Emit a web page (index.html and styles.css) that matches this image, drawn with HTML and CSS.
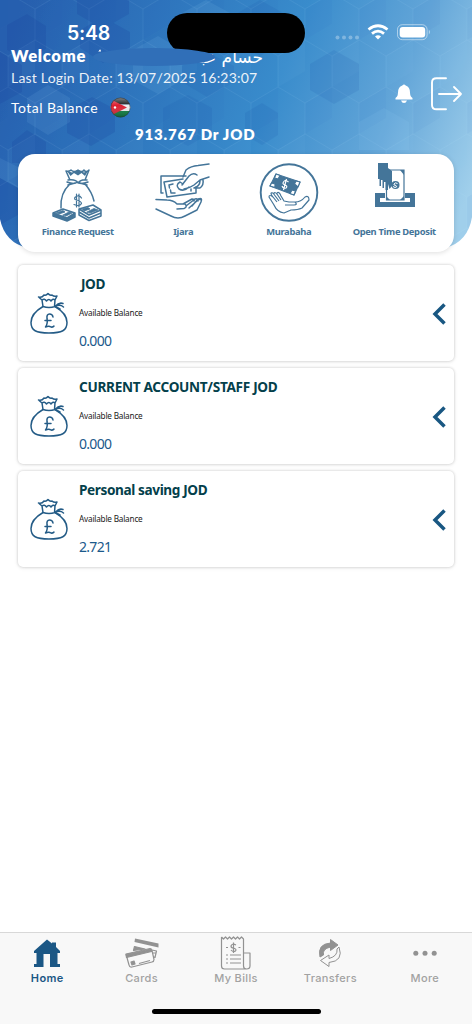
FILE: index.html
```html
<!DOCTYPE html>
<html lang="en">
<head>
<meta charset="utf-8">
<title>Accounts</title>
<link rel="stylesheet" href="styles.css">
</head>
<body>
<svg class="defs" width="0" height="0" aria-hidden="true">
  <symbol id="pouch" viewBox="0 0 38 44">
    <g fill="none" stroke="currentColor" stroke-width="1.500" stroke-linecap="round" stroke-linejoin="round">
      <path d="M13 15.500C7 19 1 24 1 31.500C1 39.500 6 42 19 42S37 39.500 37 31.500C37 24 31 19 25 15.500"/>
      <path d="M13 15.500Q19 17.500 25 15.500M13 15.500L12 9L8.500 6Q12 7 14 4Q16 5 18 2.500Q20 5 22 4Q24 6 27 5L25 9L24.500 15.500M12 9Q14.500 7 16.500 10Q19 7 21 10Q23 7 25 9M25 15.500Q29 11 33 12.500M25 15.500Q30 13 33.500 16M26 16L30 18"/>
      <path d="M23 26Q22.500 23 19.500 23Q16.500 23 17 27.500Q18 33 15.500 36Q19 34.500 21 36Q23 36.500 24 35M15 29.500H21"/>
    </g>
  </symbol>
</svg>
<main class="screen">
  <header class="hero">
    <svg class="hero-art" viewBox="0 0 472 248" preserveAspectRatio="none">
      <defs>
        <linearGradient id="sky" gradientUnits="userSpaceOnUse" x1="0" y1="60" x2="450" y2="240">
          <stop offset="0" stop-color="#2760af"/><stop offset=".3" stop-color="#2f77be"/>
          <stop offset=".55" stop-color="#398ccc"/><stop offset=".78" stop-color="#62a5d8"/><stop offset="1" stop-color="#a0cfeb"/>
        </linearGradient>
        <pattern id="hex" width="54" height="94" patternUnits="userSpaceOnUse" patternTransform="translate(35 -7)">
          <path d="M0 16L27 0V31L0 47Z" fill="#1855a8" opacity=".04"/>
          <path d="M27 63L54 47V78L27 94Z" fill="#8fd0f5" opacity=".05"/>
          <path d="M0 16L27 0L54 16V47L27 63L0 47ZM27 63V94" fill="none" stroke="#b9e2fa" stroke-width=".7" opacity=".11"/>
        </pattern>
        <clipPath id="heroShape"><path d="M0 0H472V217Q468 242 445 248H28Q5 243 0 219Z"/></clipPath>
      </defs>
      <g clip-path="url(#heroShape)">
        <path d="M0 0H472V248H0Z" fill="url(#sky)"/>
        <path d="M0 0H472V248H0Z" fill="url(#hex)"/>
        <g fill="#143f9a" opacity=".2">
          <path d="M7 25L27 14L46 26V49L27 60L7 50Z"/><path d="M77 0H129V14L103 29L77 14Z"/><path d="M80 30L103 17L130 32V48L103 63L80 48Z"/>
          <path d="M0 52L22 65V92L0 104Z"/><path d="M0 178L18 188V215L0 225Z"/><path d="M12 142L27 130L46 142V163H12Z"/><path d="M67 110L92 97L115 109V132L91 146L67 133Z"/>
        </g>
        <g fill="#164fa8" opacity=".12">
          <path d="M182 66L207 52L234 66V82L207 97L182 82Z"/><path d="M236 14L260 0L285 14V42L260 56L236 42Z"/><path d="M163 108L188 95L212 108V132L188 146L163 132Z"/><path d="M310 64L334 50L359 64V90L334 104L310 90Z"/><path d="M245 113L262 103L278 113V135L262 145L245 135Z"/>
        </g>
        <g fill="#a3dcff" opacity=".09">
          <path d="M0 158L18 167V188L0 178Z"/><path d="M27 98L48 85L70 98V122L48 135L27 122Z"/><path d="M133 50L158 36L182 50V80L158 94L133 80Z"/><path d="M206 0L230 13L206 28L182 13Z"/><path d="M359 122L384 108L409 122V150H359Z"/>
        </g>
      </g>
    </svg>

    <div class="status">
      <span class="clock">5:48</span>
      <svg class="signals" width="96" height="20" viewBox="0 0 96 20" fill="#fff">
        <g opacity=".3"><circle cx="2.500" cy="14.500" r="2"/><circle cx="9" cy="14.500" r="2"/><circle cx="15.500" cy="14.500" r="2"/><circle cx="22" cy="14.500" r="2"/></g>
        <g fill="none" stroke="#fff" stroke-width="2.800"><path d="M33.500 6.500Q43 -1 52.500 6.500"/><path d="M37 10.600Q43 5.600 49 10.600"/></g>
        <path d="M40 13.500Q43 11 46 13.500L43 16.500Z"/>
        <rect x="62.500" y="1.700" width="29.600" height="15" rx="4.800" fill="none" stroke="#fff" opacity=".5"/>
        <rect x="64.700" y="4" width="25.500" height="10.500" rx="3"/><path d="M93.800 6.500Q96.200 9 93.800 11.500Z" opacity=".5"/>
      </svg>
    </div>
    <div class="island"></div>

    <div class="profile">
      <div class="greeting">
        <p class="welcome">Welcome</p>
        <p class="customer" lang="ar" dir="rtl">حسام عبـ</p>
        <svg class="veil" width="124" height="21" viewBox="0 0 124 21"><ellipse cx="61" cy="10" rx="61" ry="9" fill="#306fb8"/><path d="M5 4.500L6.500 3.500V4.500ZM6 3L7.500 2.500L8 4.500H6.500Z" fill="#fff"/></svg>
        <p class="login">Last Login Date: 13/07/2025 16:23:07</p>
      </div>
      <div class="tools">
        <svg width="18" height="20" viewBox="0 0 18 20" fill="#fff"><path d="M7.300 1.500Q9 -.5 10.700 1.500Q15 3 15 8.500Q15 12.500 17.500 14V15.500H.5V14Q3 12.500 3 8.500Q3 3 7.300 1.500ZM6 16.500H12Q11 19 9 19T6 16.500Z"/></svg>
        <svg width="32" height="34" viewBox="0 0 32 34" fill="none" stroke="#fff" stroke-width="1.900" stroke-linecap="round" stroke-linejoin="round"><path d="M15 1.300H5.500Q1 1.300 1 5.500V28Q1 32.300 5.500 32.300H15M8 17H30M23 10L30 17L23 24"/></svg>
      </div>
    </div>

    <div class="total"><span>Total Balance</span>
      <svg width="21" height="21" viewBox="0 0 21 21">
        <defs><clipPath id="disc"><circle cx="10.500" cy="10.500" r="9.800"/></clipPath><linearGradient id="shine" x2="0" y2="1"><stop stop-color="#fff" stop-opacity=".5"/><stop offset=".4" stop-color="#fff" stop-opacity="0"/><stop offset="1" stop-color="#001b15" stop-opacity=".35"/></linearGradient></defs>
        <g clip-path="url(#disc)"><path fill="#191b1b" d="M0 0H21V7.500H0Z"/><path fill="#eee" d="M0 7.500H21V14H0Z"/><path fill="#087b3c" d="M0 14H21V21H0Z"/><path fill="#dc1f31" d="M0 2L17 10.500L0 19Z"/><circle cx="5" cy="10.500" r="1.200" fill="#fff"/><path fill="url(#shine)" d="M0 0H21V21H0Z"/></g>
        <circle cx="10.500" cy="10.500" r="9.600" fill="none" stroke="#343a3e" stroke-width=".8" opacity=".65"/>
      </svg>
    </div>
    <p class="amount">913.767 Dr JOD</p>

    <nav class="actions">
      <a class="action"><svg width="54" height="60" viewBox="0 0 54 60" fill="none" stroke="#447599" stroke-width="1.500" stroke-linejoin="round" stroke-linecap="round">
        <path d="M19 18L15 9Q18 10 20 8Q23 11 27 8Q31 11 33 8Q35 11 38 8L34 18M16 20Q24 23 26 20Q29 23 37 20M17 23L24 21M36 23L29 21M17 18Q25 17 27 21Q30 17 36 18M19 22Q9 31 10 46M34 22Q41 30 43 39"/><path d="M16 9L19.500 14L23 11L27 13.500L30.500 11L34 14L37 9L33 10.500L27 8L21 10.500Z" fill="#447599" stroke="none"/>
        <path d="M30.500 36Q29 33.500 26.500 34Q22.500 35 24 37.500Q30.500 39 30.500 41.500Q29 45 23 42.500M25.500 32V45M28 32V45" stroke-width="1.200"/>
        <path d="M2 51L12 47L24 51L16 56ZM2 51V54L16 59L24 55V51M16 56V59M2 52.500L16 57.500L24 53M28 47L42 43L50 48L38 53ZM28 50L38 56L50 51M28 53L38 58.500L50 54M28 47V53M50 48V54"/>
        <path d="M5 51L12 48.500L14 50L8 52ZM15 54L21 51L18 50L12 53ZM31 47L37 45.500L39 47L33 49ZM39 51L47 48L43 46.500L36 50Z" fill="#447599" stroke-width=".8"/>
      </svg><span>Finance Request</span></a>
      <a class="action"><svg width="56" height="60" viewBox="0 0 56 60" fill="none" stroke="#447599" stroke-width="1.500" stroke-linejoin="round" stroke-linecap="round">
        <path d="M8 31H6V14H31M28 17L9 20L12 35L41 31V25M14 23L14.500 26M14 23L18 22M16 31H20M15.500 28L16 31M36 29V27"/>
        <path d="M28 15L31 8Q36 4 43 3.500L54 2M27 23L34 14Q38 10 42 13M29 27Q35 26 39 23L45 18L54 15M48 18Q49 23 45 26H39M45 19Q45 24 39 26M34 25Q29 30 24 27Q20 23 25 20L28 22"/>
        <path d="M1 37.500L12 38Q18 38 22 42H30Q33 45 29 46.500L22 47M1 47L16 54Q23 58 30 54L42 48L46 40Q47 36 43 38L34 46M37 44L43 37Q48 35 46 40M31 44L40 37Q43 36 43 39M28 42L37 37Q40 37 39 39"/>
      </svg><span>Ijara</span></a>
      <a class="action"><svg width="60" height="60" viewBox="0 0 60 60" fill="none" stroke="#447599" stroke-width="1.200" stroke-linejoin="round">
        <circle cx="30" cy="30.500" r="28.300" stroke-width="1.900"/><path d="M17 12L41 20L35 33L11 24Z" fill="#447599"/><path d="M17 12L21 13.500L19 17L15.500 16ZM12.500 21L16 22L16 25.500L11 24ZM37 19L41 20L39 25L35.500 22ZM31 31.500L33 28L36.500 29L35 33Z" fill="#fff"/>
        <path d="M29.500 20Q26 17 24.500 20Q23 22 26 23Q29 24 27 26Q24 27 23 24M27.500 17L24.500 28" stroke="#fff"/>
        <path d="M15 43L10 35Q10 32 14 35L18 40M14 35Q10 30 14 31L20 39M15 32Q15 29 18 32L22 38M18 31Q20 29 22 34L25 39L30 40H36Q39 43 35 43H26M36 40Q42 40 46 35Q50 33 50 38L43 46Q39 48 32 48L25 51Q18 50 15 43"/>
      </svg><span>Murabaha</span></a>
      <a class="action"><svg width="60" height="60" viewBox="0 0 60 60" fill="#447599">
        <path d="M11 31H21V36H16V40H46V36H41V31H51V45H11Z"/>
        <path d="M22.500 8H40V38H22.500Z" fill="#fff" stroke="#447599" stroke-width="1.200"/><path d="M36 8H40V13ZM22 38V34L26 38ZM40 34V38H36Z"/><circle cx="31.500" cy="23" r="4"/>
        <path d="M33.500 21.500Q31 20 30 22Q29 23 32 23.500Q34 25 31 25.500L29 24.500" fill="none" stroke="#fff"/>
        <path d="M14 1H24V6L28 9V24L25.500 27L24 22V28H21.500V20H20V26H18.500V18H17V24H15.500V17H14Z"/>
      </svg><span>Open Time Deposit</span></a>
    </nav>
  </header>

  <section class="accounts">
    <article class="account"><svg class="pouch"><use href="#pouch"/></svg><div class="details"><h2 class="short">JOD</h2><p class="caption">Available Balance</p><p class="balance">0.000</p></div><svg class="chevron" viewBox="0 0 14 22"><path d="M12.500 1.500L3 11L12.500 20.500" fill="none" stroke="#195782" stroke-width="3.500"/></svg></article>
    <article class="account"><svg class="pouch"><use href="#pouch"/></svg><div class="details"><h2 class="upper">CURRENT ACCOUNT/STAFF JOD</h2><p class="caption">Available Balance</p><p class="balance">0.000</p></div><svg class="chevron" viewBox="0 0 14 22"><path d="M12.500 1.500L3 11L12.500 20.500" fill="none" stroke="#195782" stroke-width="3.500"/></svg></article>
    <article class="account"><svg class="pouch"><use href="#pouch"/></svg><div class="details"><h2>Personal saving JOD</h2><p class="caption">Available Balance</p><p class="balance">2.721</p></div><svg class="chevron" viewBox="0 0 14 22"><path d="M12.500 1.500L3 11L12.500 20.500" fill="none" stroke="#195782" stroke-width="3.500"/></svg></article>
  </section>

  <footer class="dock">
    <nav class="tabs">
      <a class="tab current"><svg width="36" height="36" viewBox="0 0 36 36" fill="currentColor"><path d="M18 4.500L23 8.500V7.500H27V12L31 16V18H28.500V29H31V32H21V19H14.500V32H5V29H7.500V18H5V16Z"/></svg><span>Home</span></a>
      <a class="tab"><svg width="36" height="36" viewBox="0 0 36 36" fill="none" stroke="currentColor" stroke-width="1.200" stroke-linejoin="round"><path d="M11 3.500L34.500 8.500V12.500L10.500 7Z" fill="currentColor" stroke="none"/><path d="M9.500 15.500L10.500 11.500L21 14Z" fill="currentColor"/><path d="M28 15L32.500 16L31 22.500L29.500 22M28 18H32"/><path d="M2 19L26 13.500Q27 13.500 28 15.500L30 24.500Q30 26.500 28 27L8 32Q5.500 32.500 5 30Z"/><path d="M2 19.500L27 14L27.500 16.500L2.500 22.500Z" fill="currentColor"/><path d="M7 27L10 26L11 29L8 30Z" fill="currentColor"/><path d="M15 28.500L26 25.500"/></svg><span>Cards</span></a>
      <a class="tab"><svg width="36" height="36" viewBox="0 0 36 36" fill="none" stroke="currentColor" stroke-width="1.200" stroke-linejoin="round"><path d="M3.500 2L5.500 4L7.500 2L9.500 4L11.500 2L13.500 4L15.500 2L17.500 4L19.500 2L21.500 4L23.500 2L25.500 4V31Q25.500 34 28.500 34Q32 34 32 31V18H26M3.500 2V31Q3.500 34 6.500 34H29M8 20H10M12 20H23M8 24H10M12 24H23M8 28H10M12 28H23M8 12.500H10M20.500 12.500H22.500"/><path d="M18 10Q14 8 13 11Q13 13 15.500 13Q19 14 17.500 16Q15 17.500 13 15M15.500 7.500V18"/></svg><span>My Bills</span></a>
      <a class="tab"><svg width="36" height="36" viewBox="0 0 36 36" fill="none" stroke="currentColor" stroke-width="1" stroke-linejoin="round"><path d="M8 22Q5 9 18.500 8V4.500L26 10L18.500 15.500V12Q10 14 11.500 20Z" fill="currentColor"/><path d="M25 14L27 12Q32 26 17 27.500V31.500L8.500 25.500L17 20V23.500Q26 21 25 14Z"/></svg><span>Transfers</span></a>
      <a class="tab"><svg width="36" height="36" viewBox="0 0 36 36" fill="currentColor"><circle cx="8.800" cy="18.300" r="2.500"/><circle cx="18" cy="18.300" r="2.500"/><circle cx="27.200" cy="18.300" r="2.500"/></svg><span>More</span></a>
    </nav>
    <div class="home-indicator"></div>
  </footer>
</main>
</body>
</html>
```
FILE: styles.css
```css
* { box-sizing: border-box; }
body, p, h2 { margin: 0; }
body { background: #fff; font-family: "Noto Sans", "Open Sans", sans-serif; }
svg { display: block; flex: none; }
.defs { position: absolute; }
.screen { width: 472px; height: 1024px; display: flex; flex-direction: column; overflow: hidden; }

.hero { position: relative; height: 252px; color: #fff; font-family: Lato, sans-serif; flex: none; }
.hero-art { position: absolute; inset: 0; width: 472px; height: 248px; }
.hero > :not(.hero-art):not(.island) { position: relative; }
.status { height: 46px; padding: 22px 41px 0 67px; display: flex; justify-content: space-between; }
.clock { font: 600 19.500px/22px Inter, sans-serif; letter-spacing: -.2px; }
.signals { margin-top: 1px; }
.island { position: absolute; z-index: 3; left: 167px; top: 13px; width: 138px; height: 40px; border-radius: 20px; background: #000; }
.profile { height: 49px; padding: 0 9px 0 11px; display: flex; justify-content: space-between; }
.greeting { position: relative; width: 260px; }
.welcome { font-size: 16.500px; line-height: 20px; font-weight: 800; letter-spacing: .7px; }
.customer { position: absolute; right: 8px; top: -1px; font: 17px/24px "DejaVu Sans", sans-serif; white-space: nowrap; }
.veil { position: absolute; z-index: 4; left: 82px; top: 1px; }
.login { position: relative; margin-top: 2px; font-size: 14px; line-height: 20px; letter-spacing: .2px; white-space: nowrap; opacity: .9; }
.tools { display: flex; align-items: center; gap: 18px; height: 34px; margin-top: 31px; }
.total { height: 25px; display: flex; align-items: center; gap: 12px; padding-left: 11px; font-size: 14px; letter-spacing: .45px; }
.amount { margin-top: 1px; padding-left: 135px; line-height: 27px; font-size: 15px; font-weight: 800; letter-spacing: .8px; }
.actions { margin: 6px 18px 0; height: 98px; padding: 8px 7px 0; border-radius: 17px; background: #fff; box-shadow: 0 1px 5px #0002; display: grid; grid-template-columns: repeat(4, 1fr); }
.action { display: flex; flex-direction: column; align-items: center; gap: 1px; color: #447599; font: 700 9.400px/17px "Noto Sans", sans-serif; letter-spacing: -.32px; white-space: nowrap; }

.accounts { padding: 13px 18px; display: flex; flex-direction: column; gap: 7px; flex: 1; }
.account { height: 96px; display: flex; align-items: center; padding: 0 8px 0 12px; border-radius: 5px; box-shadow: 0 0 3px #0003, 0 1px 5px #0001; background: #fff; }
.pouch { width: 38px; height: 44px; color: #235b86; }
.details { flex: 1; height: 96px; padding: 8px 0 0 11px; }
.details h2 { color: #04404b; font-size: 13.600px; line-height: 22px; font-weight: 700; letter-spacing: -.38px; white-space: nowrap; }
.details .short { padding-left: 2px; }
.details .upper { letter-spacing: -.3px; }
.caption { margin-top: 9px; font-size: 8.200px; line-height: 18px; color: #202020; letter-spacing: -.2px; }
.balance { margin-top: 9px; font-size: 14px; line-height: 20px; color: #1b598b; letter-spacing: -.7px; }
.chevron { width: 14px; height: 22px; margin-top: 1px; }

.dock { height: 92px; border-top: 1px solid #d8d8d8; background: #f8f8f8; flex: none; }
.tabs { display: grid; grid-template-columns: repeat(5, 1fr); height: 76px; }
.tab { display: flex; flex-direction: column; align-items: center; color: #929292; padding-top: 2px; font: 500 11px/14px Inter, sans-serif; letter-spacing: .35px; }
.tab span { color: #a2a2a2; }
.tab.current, .tab.current span { color: #1b5785; font-weight: 600; }
.home-indicator { width: 169px; height: 5px; margin: 0 auto; border-radius: 3px; background: #000; }
```
